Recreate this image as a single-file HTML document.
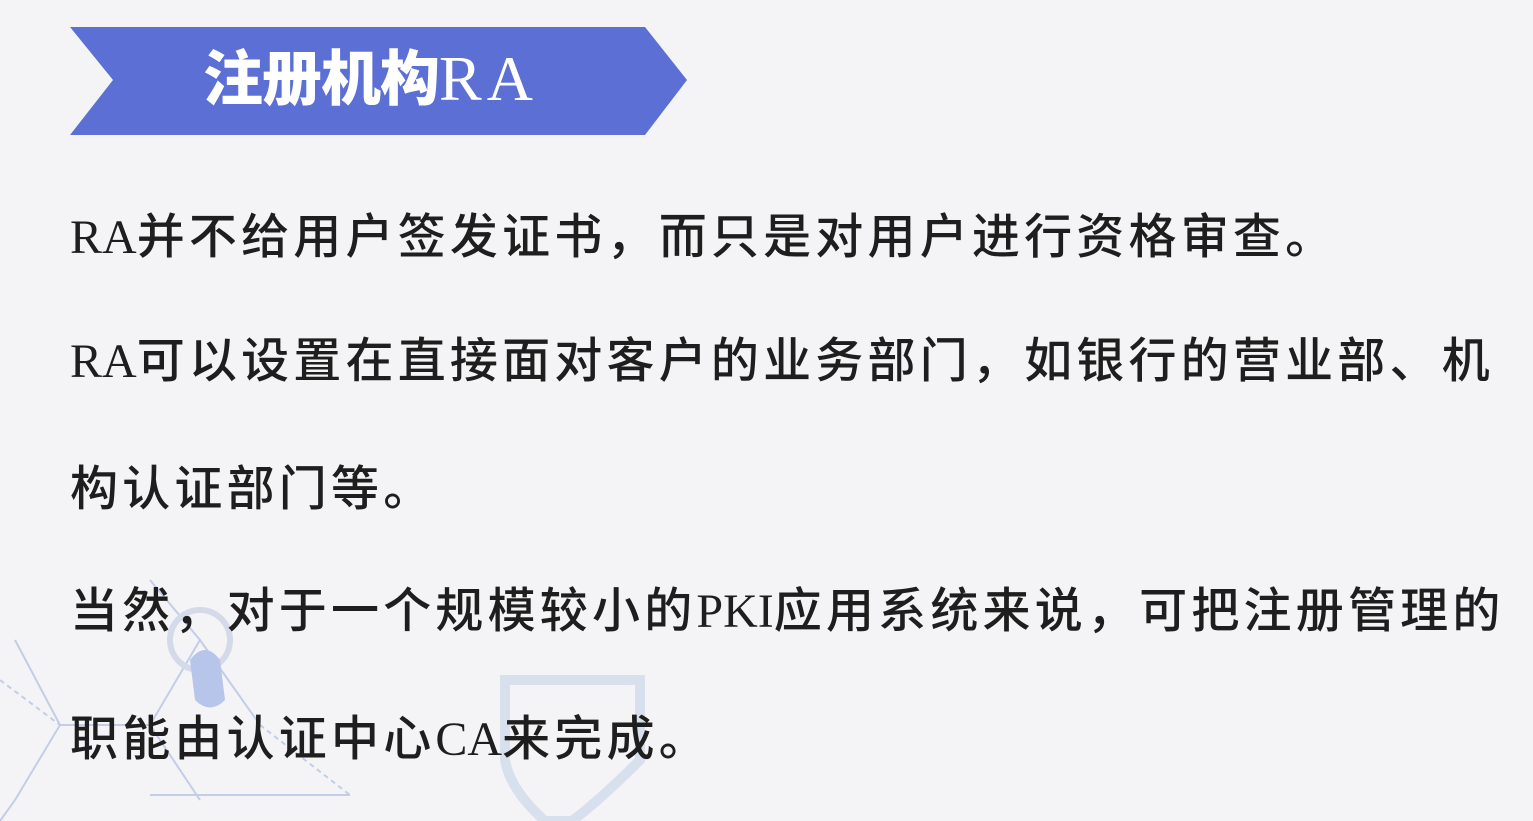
<!DOCTYPE html>
<html><head><meta charset="utf-8"><style>
body{margin:0;width:1533px;height:821px;overflow:hidden;background:#f4f4f6;position:relative;font-family:"Liberation Serif","Noto Sans CJK SC",sans-serif;}
.t{position:absolute;left:70px;font-size:48px;letter-spacing:4.2px;color:#1e1e1e;white-space:nowrap;line-height:60px;font-weight:500;font-family:"Liberation Serif","Noto Sans CJK SC",sans-serif;}
.t b{font-weight:normal;letter-spacing:0}
</style></head><body>
<svg width="1533" height="821" style="position:absolute;left:0;top:0">
<g stroke="#b8c4e4" stroke-width="2" fill="none" opacity="0.8">
<path d="M15 640 L60 725 L15 800"/><path d="M60 725 L150 725 L200 800"/><path d="M150 725 L200 640 L260 725"/>
<path d="M200 640 L150 580"/><path d="M260 725 L350 795" stroke-dasharray="5 4"/><path d="M150 795 L350 795"/>
<path d="M0 680 L60 725" stroke-dasharray="5 4"/><path d="M15 800 L0 821"/>
</g>
<circle cx="200" cy="640" r="30" fill="none" stroke="#d4daea" stroke-width="6"/>
<path d="M190 660 Q205 640 220 660 L225 700 Q210 715 195 700 Z" fill="#b7c5ea"/>
<path d="M505 680 L640 680 L640 760 Q600 800 572 821 L545 821 Q510 790 505 760 Z" fill="none" stroke="#d8e0ee" stroke-width="10"/>
<polygon points="70,27 645,27 687,80 645,135 70,135 113,80" fill="#5b6fd4"/>
</svg>
<div style="position:absolute;left:203px;top:44px;font-size:60px;line-height:70px;color:#fff;font-weight:900;font-family:'Liberation Serif','Noto Sans CJK SC',sans-serif;white-space:nowrap;letter-spacing:-1px">注册机构<span style="font-weight:normal;font-size:64px;letter-spacing:5px">RA</span></div>
<div class="t" style="top:208px"><b>RA</b>并不给用户签发证书，而只是对用户进行资格审查。</div>
<div class="t" style="top:332px"><b>RA</b>可以设置在直接面对客户的业务部门，如银行的营业部、机</div>
<div class="t" style="top:460px">构认证部门等。</div>
<div class="t" style="top:582px">当然，对于一个规模较小的<b>PKI</b>应用系统来说，可把注册管理的</div>
<div class="t" style="top:710px">职能由认证中心<b>CA</b>来完成。</div>
</body></html>
